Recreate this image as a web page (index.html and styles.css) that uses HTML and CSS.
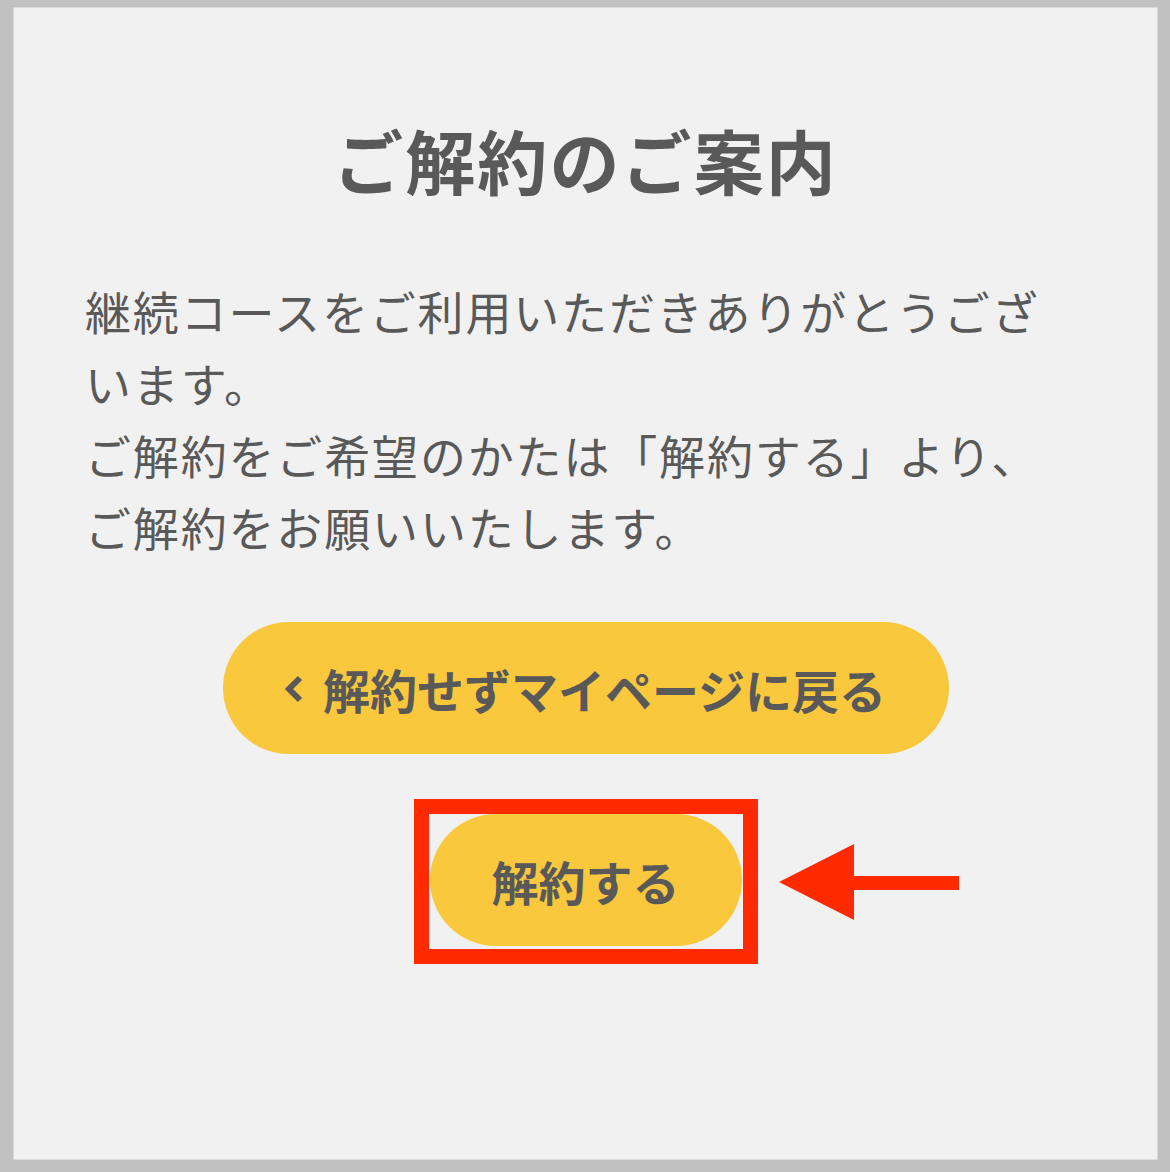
FILE: index.html
```html
<!DOCTYPE html>
<html lang="ja">
<head>
<meta charset="utf-8">
<title>ご解約のご案内</title>
<link rel="stylesheet" href="styles.css">
</head>
<body>
<div class="frame">
  <main class="panel">
    <h1 class="title">ご解約のご案内</h1>
    <p class="message">継続コースをご利用いただきありがとうございます。<br>ご解約をご希望のかたは「解約する」より、<br>ご解約をお願いいたします。</p>
    <div class="actions">
      <a class="btn btn-back" href="#">
        <svg class="chev" width="18" height="30" viewBox="0 0 18 30" aria-hidden="true"><polyline points="15,4 4,15 15,26" fill="none" stroke="#595959" stroke-width="6" stroke-linecap="butt" stroke-linejoin="miter"/></svg>
        <span>解約せずマイページに戻る</span>
      </a>
      <div class="highlight">
        <a class="btn btn-cancel" href="#">解約する</a>
        <svg class="arrow" width="180" height="76" viewBox="0 0 180 76" aria-hidden="true"><polygon points="0,38 75,0 75,76" fill="#ff2a00"/><rect x="74" y="32" width="106" height="14" fill="#ff2a00"/></svg>
      </div>
    </div>
  </main>
</div>
</body>
</html>
```
FILE: styles.css
```css
html, body {
  margin: 0;
  padding: 0;
}
body {
  background: #c1c1c1;
  font-family: "Noto Sans CJK JP", "Noto Sans", sans-serif;
  color: #595959;
}
.frame {
  padding: 7px 12px 12px 13px;
  box-sizing: border-box;
  height: 1172px;
}
.panel {
  height: 100%;
  box-sizing: border-box;
  background: #f1f1f1;
  border: 1px solid #dadada;
  display: flex;
  flex-direction: column;
  align-items: center;
  padding-top: 103px;
}
.title {
  margin: 0;
  font-size: 70px;
  font-weight: 700;
  line-height: 98px;
  letter-spacing: 0.03em;
  text-align: center;
}
.message {
  align-self: flex-start;
  margin: 65px 0 0 71px;
  width: 990px;
  font-size: 46px;
  line-height: 72px;
  letter-spacing: 0.04em;
}
.actions {
  margin-top: 60px;
  display: flex;
  flex-direction: column;
  align-items: center;
}
.btn {
  display: flex;
  align-items: center;
  justify-content: center;
  background: #f9c83c;
  color: #595959;
  text-decoration: none;
  font-weight: 700;
  font-size: 47px;
  height: 132px;
  border-radius: 66px;
}
.btn-back {
  width: 726px;
  gap: 20px;
}
.chev {
  display: block;
  margin-top: 2px;
}
.highlight {
  position: relative;
  margin-top: 45px;
  border: 15px solid #ff2a00;
  padding: 0 1px 3px 1px;
}
.btn-cancel {
  width: 312px;
}
.arrow {
  position: absolute;
  left: calc(100% + 36px);
  top: 30px;
}
```
